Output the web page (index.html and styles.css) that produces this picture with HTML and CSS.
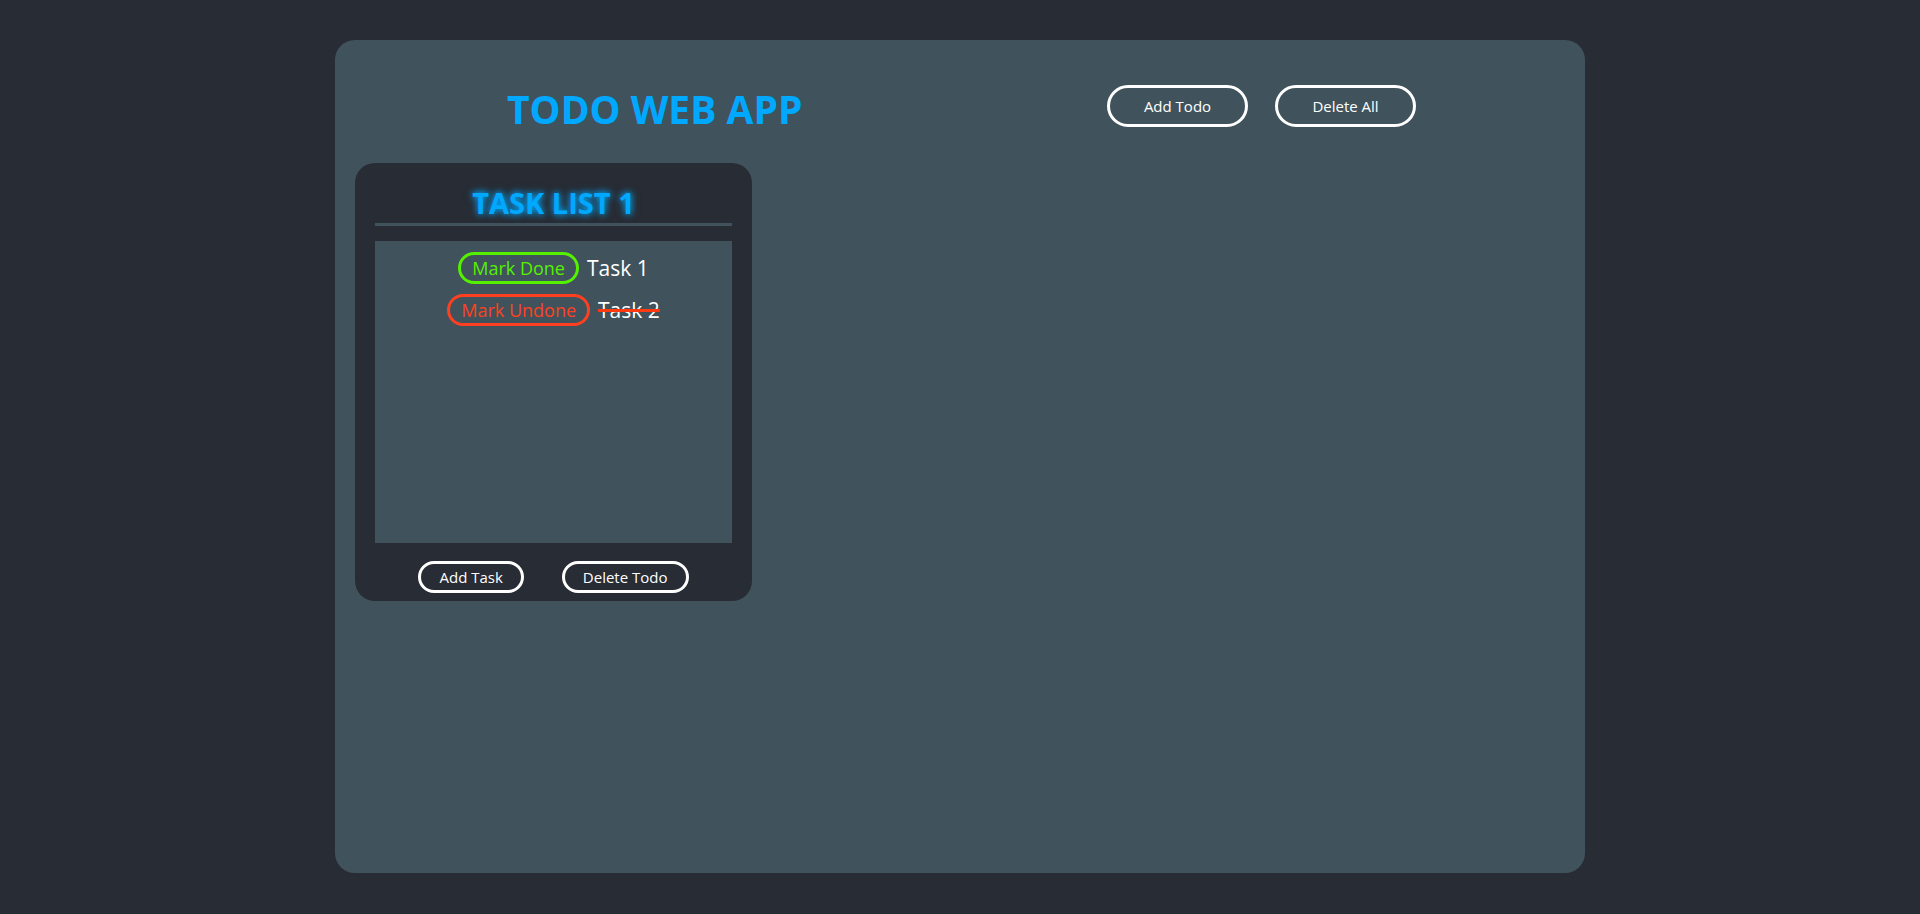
FILE: index.html
```html
<!DOCTYPE html>
<html lang="en">
<head>
<meta charset="utf-8">
<title>Todo Web App</title>
<link rel="stylesheet" href="styles.css">
</head>
<body>
<div class="app">
  <header class="header">
    <h1 class="title">TODO WEB APP</h1>
    <div class="header-actions">
      <button class="btn btn-lg">Add Todo</button>
      <button class="btn btn-lg">Delete All</button>
    </div>
  </header>
  <main class="board">
    <section class="card">
      <h2 class="card-title">TASK LIST 1</h2>
      <div class="divider"></div>
      <div class="tasks">
        <div class="task">
          <button class="pill pill-done">Mark Done</button>
          <span class="task-name">Task 1</span>
        </div>
        <div class="task">
          <button class="pill pill-undone">Mark Undone</button>
          <span class="task-name task-struck">Task 2</span>
        </div>
      </div>
      <div class="card-actions">
        <button class="btn btn-sm">Add Task</button>
        <button class="btn btn-sm">Delete Todo</button>
      </div>
    </section>
  </main>
</div>
</body>
</html>
```

FILE: styles.css
```css
html, body {
  margin: 0;
  padding: 0;
}

body {
  background: #282c34;
  font-family: "Open Sans", "Noto Sans", sans-serif;
  color: #ffffff;
}

.app {
  width: 1250px;
  height: 833px;
  margin: 40px auto 0;
  background: #40535d;
  border-radius: 20px;
  padding: 0 20px;
  box-sizing: border-box;
}

.header {
  display: flex;
  align-items: center;
  justify-content: space-between;
  padding: 45px 149px 0 152px;
  height: 42px;
  box-sizing: content-box;
  margin-bottom: 36px;
}

.title {
  margin: 0;
  font-size: 39px;
  line-height: 1;
  font-weight: 700;
  color: #00a8ff;
  position: relative;
  top: 2px;
}

.header-actions {
  display: flex;
  gap: 27px;
}

.btn {
  font-family: "Open Sans", "Noto Sans", sans-serif;
  background: transparent;
  color: #ffffff;
  border: 3px solid #ffffff;
  border-radius: 999px;
  cursor: pointer;
  margin: 0;
}

.btn-lg {
  height: 42px;
  width: 141px;
  font-size: 15px;
  padding: 0;
}

.btn-sm {
  height: 32px;
  font-size: 15px;
  padding: 0 18px;
}

.board {
  display: flex;
}

.card {
  width: 397px;
  height: 438px;
  background: #282c34;
  border-radius: 20px;
  padding: 25px 20px 0;
  box-sizing: border-box;
}

.card-title {
  margin: 0;
  text-align: center;
  font-size: 29px;
  line-height: 30px;
  font-weight: 700;
  color: #00a8ff;
  text-shadow: 0 0 6px #00a8ff, 0 0 10px rgba(0, 168, 255, 0.6);
}

.divider {
  height: 3px;
  background: #40535d;
  margin-top: 5px;
}

.tasks {
  margin-top: 15px;
  height: 302px;
  background: #40535d;
  padding-top: 11px;
  box-sizing: border-box;
  display: flex;
  flex-direction: column;
  align-items: center;
  gap: 10px;
}

.task {
  display: flex;
  align-items: center;
  gap: 8px;
}

.pill {
  font-family: "Open Sans", "Noto Sans", sans-serif;
  height: 32px;
  font-size: 18px;
  padding: 0 11px;
  background: transparent;
  border-radius: 999px;
  border: 3px solid;
  margin: 0;
  cursor: pointer;
}

.pill-done {
  color: #55f000;
  border-color: #55f000;
}

.pill-undone {
  color: #ff4020;
  border-color: #ff4020;
}

.task-name {
  font-size: 21px;
  color: #ffffff;
}

.task-struck {
  text-decoration: line-through;
  text-decoration-color: #ff3a10;
  text-decoration-thickness: 3px;
}

.card-actions {
  display: flex;
  justify-content: center;
  gap: 38px;
  margin-top: 18px;
}
```
